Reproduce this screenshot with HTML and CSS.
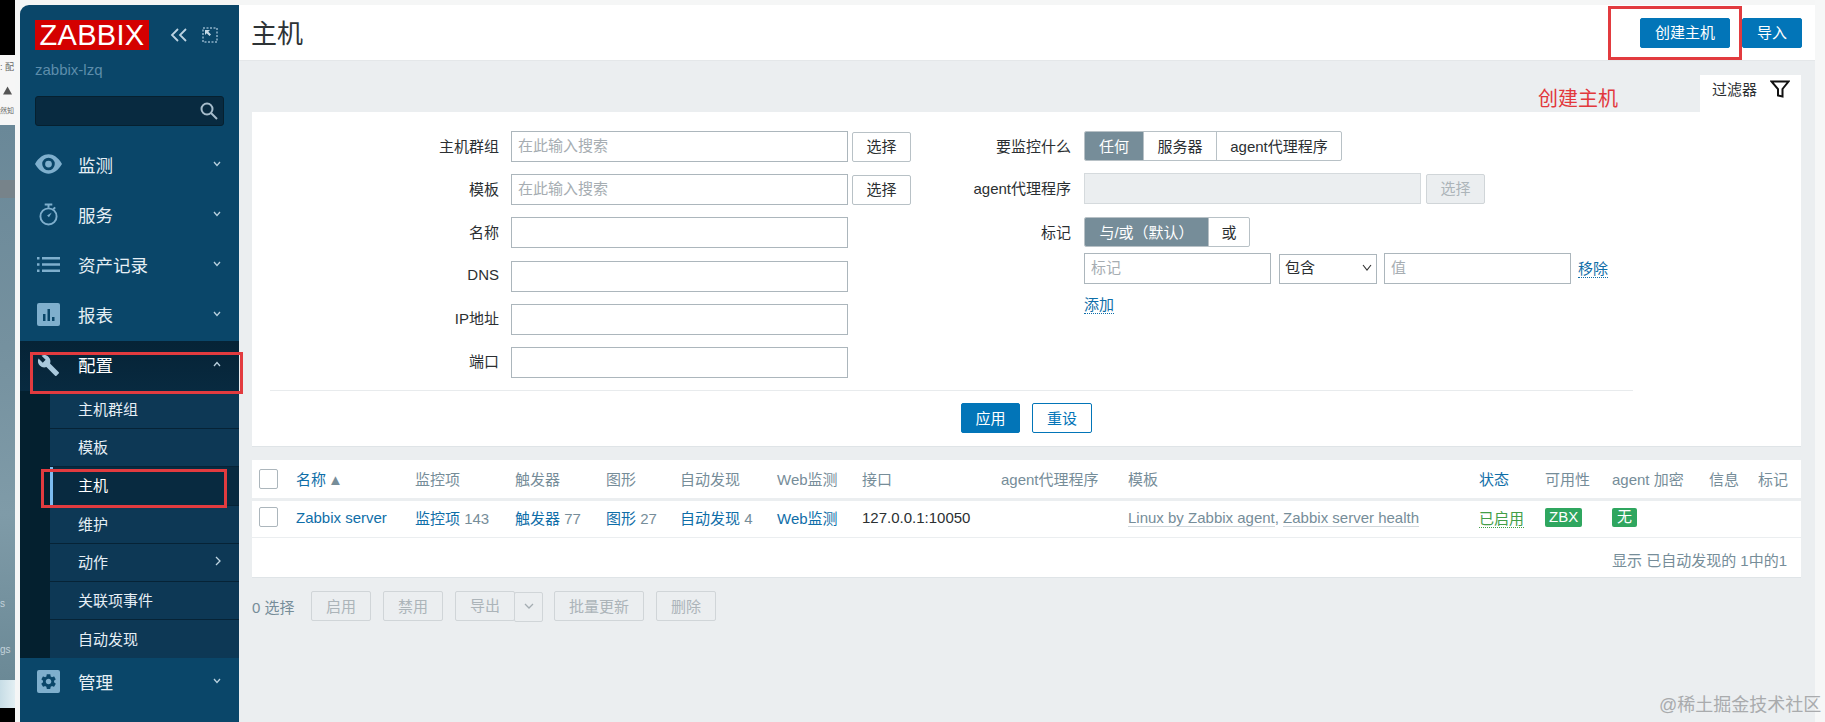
FILE: index.html
```html
<!DOCTYPE html>
<html lang="zh">
<head>
<meta charset="utf-8">
<title>主机 - Zabbix</title>
<link rel="stylesheet" href="styles.css">
</head>
<body>
<div class="screen">
  <div class="backdrop">
    <div class="bd-black-top"></div>
    <div class="bd-notes">
      <span class="bd-note">: 配</span>
      <svg class="bd-warn" viewBox="0 0 10 9"><path d="M5 0l5 9H0z"/></svg>
      <span class="bd-note bd-note-small">然知</span>
    </div>
    <div class="bd-blue">
      <div class="bd-band"></div>
      <span class="bd-s bd-s1">s</span>
      <span class="bd-s bd-s2">gs</span>
    </div>
    <div class="bd-light"></div>
    <div class="bd-black-bottom"></div>
  </div>

  <aside class="sidebar">
    <div class="brand">
      <div class="logo">ZABBIX</div>
      <svg class="collapse-icon" viewBox="0 0 18 14"><path d="M8 1L2 7l6 6M16 1l-6 6 6 6"/></svg>
      <svg class="expand-icon" viewBox="0 0 16 16"><path class="dash" d="M1 1h14v14H1z"/><path class="arrow" d="M3 3h5L6.300 4.700 9 7.500 7.500 9 4.700 6.300 3 8z"/></svg>
    </div>
    <div class="server-name">zabbix-lzq</div>
    <div class="search">
      <svg class="search-icon" viewBox="0 0 18 18"><circle cx="7" cy="7" r="5.500"/><path d="M11 11l6 6"/></svg>
    </div>
    <nav class="menu">
      <a class="menu-row">
        <span class="menu-ico"><svg class="ic-eye" viewBox="0 0 28 20"><path fill-rule="evenodd" d="M0 10C4 3 9 0 14 0s10 3 14 10c-4 7-9 10-14 10S4 17 0 10zM14 3.500a6.500 6.500 0 1 0 0 13 6.500 6.500 0 0 0 0-13z"/><circle cx="14" cy="10" r="3.500"/></svg></span>
        <span class="menu-text">监测</span>
        <svg class="chev" viewBox="0 0 8 6"><path d="M1 1l3 3.500L7 1"/></svg>
      </a>
      <a class="menu-row">
        <span class="menu-ico"><svg class="ic-watch" viewBox="0 0 20 24"><circle cx="10" cy="14" r="8.500"/><path d="M6 1.500h8M10 2v3M17 4.500l-2 2"/><path class="needle" d="M13.500 10l-5 3 2 2z"/></svg></span>
        <span class="menu-text">服务</span>
        <svg class="chev" viewBox="0 0 8 6"><path d="M1 1l3 3.500L7 1"/></svg>
      </a>
      <a class="menu-row">
        <span class="menu-ico"><svg class="ic-list" viewBox="0 0 23 15"><path d="M0 1.200h2.500M5 1.200h18M0 7.500h2.500M5 7.500h18M0 13.800h2.500M5 13.800h18"/></svg></span>
        <span class="menu-text">资产记录</span>
        <svg class="chev" viewBox="0 0 8 6"><path d="M1 1l3 3.500L7 1"/></svg>
      </a>
      <a class="menu-row">
        <span class="menu-ico"><svg class="ic-report" viewBox="0 0 23 23"><rect width="23" height="23" rx="2"/><path class="bars" d="M6 11h2.500v7H6zM10.500 6H13v12h-2.500zM15 14h2.500v4H15z"/></svg></span>
        <span class="menu-text">报表</span>
        <svg class="chev" viewBox="0 0 8 6"><path d="M1 1l3 3.500L7 1"/></svg>
      </a>
      <div class="menu-open">
        <a class="menu-row menu-row-active">
          <span class="menu-ico"><svg class="ic-wrench" viewBox="0 0 24 24"><path d="M22.700 19l-9.100-9.100c.9-2.300.4-5-1.500-6.900-2-2-5-2.400-7.400-1.300L9 6 6 9 1.600 4.700C.4 7.100.9 10.100 2.900 12.100c1.900 1.900 4.600 2.400 6.900 1.500l9.100 9.100c.4.4 1 .4 1.400 0l2.300-2.300c.5-.4.5-1.100.1-1.400z"/></svg></span>
          <span class="menu-text menu-text-active">配置</span>
          <svg class="chev" viewBox="0 0 8 6"><path d="M1 5l3-3.500L7 5"/></svg>
        </a>
        <div class="submenu">
          <a class="sub-row">主机群组</a>
          <a class="sub-row">模板</a>
          <a class="sub-row sub-row-current">主机</a>
          <a class="sub-row">维护</a>
          <a class="sub-row">动作<svg class="chev-right" viewBox="0 0 6 10"><path d="M1 1l4 4-4 4"/></svg></a>
          <a class="sub-row">关联项事件</a>
          <a class="sub-row">自动发现</a>
        </div>
      </div>
      <a class="menu-row">
        <span class="menu-ico"><svg class="ic-gear" viewBox="0 0 23 23"><rect width="23" height="23" rx="2"/><g transform="translate(2.300 2.300) scale(.77)"><path class="bars" d="M19.140 12.940c.04-.3.06-.61.06-.94 0-.32-.02-.64-.07-.94l2.030-1.580c.18-.14.23-.41.12-.61l-1.920-3.320c-.12-.22-.37-.29-.59-.22l-2.390.96c-.5-.38-1.030-.7-1.620-.94l-.36-2.540c-.04-.24-.24-.41-.48-.41h-3.840c-.24 0-.43.17-.47.41l-.36 2.540c-.59.24-1.130.57-1.620.94l-2.390-.96c-.22-.08-.47 0-.59.22L2.740 8.870c-.12.21-.08.47.12.61l2.030 1.580c-.05.3-.09.63-.09.94s.02.64.07.94l-2.030 1.580c-.18.14-.23.41-.12.61l1.920 3.320c.12.22.37.29.59.22l2.390-.96c.5.38 1.030.7 1.620.94l.36 2.540c.05.24.24.41.48.41h3.840c.24 0 .44-.17.47-.41l.36-2.540c.59-.24 1.130-.56 1.620-.94l2.390.96c.22.08.47 0 .59-.22l1.920-3.320c.12-.22.07-.47-.12-.61l-2.010-1.580zM12 15.600c-1.980 0-3.600-1.620-3.600-3.600s1.620-3.600 3.600-3.600 3.600 1.620 3.600 3.600-1.620 3.600-3.600 3.600z"/></g></svg></span>
        <span class="menu-text">管理</span>
        <svg class="chev" viewBox="0 0 8 6"><path d="M1 1l3 3.500L7 1"/></svg>
      </a>
    </nav>
  </aside>

  <main class="main">
    <header class="page-header">
      <h1 class="page-title">主机</h1>
      <div class="header-actions">
        <button class="btn btn-primary btn-create">创建主机</button>
        <button class="btn btn-primary btn-import">导入</button>
      </div>
    </header>
    <div class="content">
      <div class="tab-row">
        <div class="filter-tab">
          <span>过滤器</span>
          <svg class="filter-icon" viewBox="0 0 20 18"><path d="M1.500 1.500h17l-6 7.500v7.500l-4.500-1V9z"/></svg>
        </div>
      </div>
      <section class="filter-card">
        <div class="filter-grid">
          <div class="filter-left">
            <div class="f-row"><label class="f-label">主机群组</label><input class="f-input" placeholder="在此输入搜索"><button class="btn btn-select">选择</button></div>
            <div class="f-row"><label class="f-label">模板</label><input class="f-input" placeholder="在此输入搜索"><button class="btn btn-select">选择</button></div>
            <div class="f-row"><label class="f-label">名称</label><input class="f-input"></div>
            <div class="f-row"><label class="f-label">DNS</label><input class="f-input"></div>
            <div class="f-row"><label class="f-label">IP地址</label><input class="f-input"></div>
            <div class="f-row"><label class="f-label">端口</label><input class="f-input"></div>
          </div>
          <div class="filter-right">
            <div class="r-row r-row-1">
              <label class="r-label">要监控什么</label>
              <div class="seg">
                <span class="seg-item seg-on seg-any">任何</span>
                <span class="seg-item seg-server">服务器</span>
                <span class="seg-item seg-agent">agent代理程序</span>
              </div>
            </div>
            <div class="r-row r-row-2">
              <label class="r-label">agent代理程序</label>
              <div class="proxy-input"></div>
              <button class="btn btn-disabled btn-proxy">选择</button>
            </div>
            <div class="r-row r-row-3">
              <label class="r-label">标记</label>
              <div class="seg">
                <span class="seg-item seg-on seg-andor">与/或（默认）</span>
                <span class="seg-item seg-or">或</span>
              </div>
            </div>
            <div class="r-row r-row-4">
              <span class="r-label"></span>
              <input class="f-input tag-input" placeholder="标记">
              <div class="select-wrap">
                <select class="tag-select"><option>包含</option></select>
                <svg class="select-chev" viewBox="0 0 10 7"><path d="M1 1l4 5 4-5"/></svg>
              </div>
              <input class="f-input tag-input tag-value" placeholder="值">
              <a class="dotted-link">移除</a>
            </div>
            <div class="r-row r-row-5">
              <span class="r-label"></span>
              <a class="dotted-link">添加</a>
            </div>
          </div>
        </div>
        <div class="filter-sep"></div>
        <div class="filter-actions">
          <button class="btn btn-primary btn-apply">应用</button>
          <button class="btn btn-reset">重设</button>
        </div>
      </section>

      <section class="table-card">
        <table class="hosts">
          <colgroup>
            <col class="c1"><col class="c2"><col class="c3"><col class="c4"><col class="c5"><col class="c6"><col class="c7"><col class="c8"><col class="c9"><col class="c10"><col class="c11"><col class="c12"><col class="c13"><col class="c14"><col class="c15">
          </colgroup>
          <thead>
            <tr>
              <th><span class="check"></span></th>
              <th><a class="link">名称</a><span class="sort">▲</span></th>
              <th>监控项</th><th>触发器</th><th>图形</th><th>自动发现</th><th>Web监测</th><th>接口</th><th>agent代理程序</th><th>模板</th>
              <th><a class="link">状态</a></th><th>可用性</th><th>agent 加密</th><th>信息</th><th>标记</th>
            </tr>
          </thead>
          <tbody>
            <tr>
              <td><span class="check"></span></td>
              <td><a class="link">Zabbix server</a></td>
              <td><a class="link">监控项</a> <span class="num">143</span></td>
              <td><a class="link">触发器</a> <span class="num">77</span></td>
              <td><a class="link">图形</a> <span class="num">27</span></td>
              <td><a class="link">自动发现</a> <span class="num">4</span></td>
              <td><a class="link">Web监测</a></td>
              <td class="plain">127.0.0.1:10050</td>
              <td></td>
              <td><a class="tpl">Linux by Zabbix agent</a><span class="num">, </span><a class="tpl">Zabbix server health</a></td>
              <td><a class="enabled">已启用</a></td>
              <td><span class="badge">ZBX</span></td>
              <td><span class="badge">无</span></td>
              <td></td>
              <td></td>
            </tr>
          </tbody>
        </table>
        <div class="table-foot">显示 已自动发现的 1中的1</div>
      </section>

      <div class="bulk-bar">
        <span class="selected">0 选择</span>
        <button class="btn btn-disabled btn-bulk">启用</button>
        <button class="btn btn-disabled btn-bulk">禁用</button>
        <div class="export-group">
          <button class="btn btn-disabled btn-bulk">导出</button>
          <button class="btn btn-disabled btn-drop"><svg class="drop-chev" viewBox="0 0 10 6"><path d="M1 1l4 4 4-4"/></svg></button>
        </div>
        <button class="btn btn-disabled btn-mass">批量更新</button>
        <button class="btn btn-disabled btn-bulk">删除</button>
      </div>
    </div>
  </main>
  <div class="main-edge"></div>

  <div class="mark mark-config"></div>
  <div class="mark mark-hosts"></div>
  <div class="mark mark-create"></div>
  <div class="mark-note">创建主机</div>
  <div class="watermark">@稀土掘金技术社区</div>
</div>
</body>
</html>
```
FILE: styles.css
```css
* { box-sizing: border-box; }
html, body { margin: 0; padding: 0; }
body {
  font-family: "Liberation Sans", "Noto Sans CJK SC", sans-serif;
  font-size: 15px;
  color: #2b2f32;
  background: #f4f5f5;
}
a { text-decoration: none; }
.screen {
  position: relative;
  display: flex;
  width: 1825px;
  height: 722px;
  overflow: hidden;
  background: #f5f6f6;
}

/* window behind the browser */
.backdrop { width: 15px; flex: none; display: flex; flex-direction: column; overflow: hidden; }
.bd-black-top { height: 55px; background: #000; }
.bd-notes {
  height: 70px; background: #f6f6f6; display: flex; flex-direction: column;
  padding-top: 6px; white-space: nowrap;
}
.bd-note { font-size: 9px; line-height: 12px; color: #666; }
.bd-note-small { font-size: 7px; margin-top: 10px; }
.bd-warn { width: 9px; height: 9px; margin: 13px 0 0 3px; fill: #555; flex: none; }
.bd-blue {
  flex: 1; position: relative;
  background: linear-gradient(180deg, #6a8898 0%, #75919f 40%, #7f9ba8 70%, #6b8996 100%);
}
.bd-band { height: 18px; margin-top: 55px; background: #77838a; }
.bd-s { position: absolute; color: #c3d2da; font-size: 10px; line-height: 12px; }
.bd-s1 { left: 0; top: 473px; }
.bd-s2 { left: 0; top: 519px; }
.bd-light { height: 28px; background: linear-gradient(90deg, #c7dde6, #e3eff3); }
.bd-black-bottom { height: 14px; background: #000; }

/* sidebar */
.sidebar {
  width: 219px; flex: none; margin: 5px 0 0 5px;
  background: #0a4669; border-top-left-radius: 9px;
  display: flex; flex-direction: column;
}
.brand { display: flex; align-items: center; padding: 15px 0 0 15px; }
.logo {
  width: 114px; height: 30px; background: #d40000; color: #fff;
  font-size: 29px; line-height: 30px; text-align: center; letter-spacing: .3px;
}
.collapse-icon { width: 18px; height: 14px; margin-left: 21px; fill: none; stroke: #bcd3e2; stroke-width: 1.800; }
.expand-icon { width: 16px; height: 16px; margin-left: 14px; }
.expand-icon .dash { fill: none; stroke: #8fb2c9; stroke-width: 1.500; stroke-dasharray: 2 1.500; }
.expand-icon .arrow { fill: #c6dae6; }
.server-name { margin: 11px 0 0 15px; font-size: 15px; line-height: 17px; color: #5d8dab; }
.search {
  margin: 18px 15px 0; height: 30px; background: #082a40; border: 1px solid #06202f;
  border-radius: 3px; display: flex; align-items: center; justify-content: flex-end; padding-right: 5px;
}
.search-icon { width: 18px; height: 18px; fill: none; stroke: #a6bccb; stroke-width: 2; }
.menu { margin-top: 15px; display: flex; flex-direction: column; }
.menu-row { height: 50px; display: flex; align-items: center; padding: 0 18px 4px 15px; color: #e6eff5; }
.menu-ico { width: 43px; flex: none; display: flex; justify-content: center; padding-right: 16px; }
.menu-text { flex: 1; font-size: 17.500px; }
.menu-text-active { color: #fff; }
.menu-ico svg { display: block; }
.ic-eye { width: 27px; height: 20px; flex: none; fill: #7fafcd; }
.ic-watch { width: 19px; height: 23px; flex: none; fill: none; stroke: #7fafcd; stroke-width: 2; }
.ic-watch .needle { fill: #7fafcd; stroke: none; }
.ic-list { width: 23px; height: 15px; flex: none; fill: none; stroke: #7fafcd; stroke-width: 2.400; }
.ic-report, .ic-gear { width: 23px; height: 23px; flex: none; fill: #7fafcd; }
.bars { fill: #0a4669; }
.ic-wrench { width: 23px; height: 23px; flex: none; fill: #a9c9dd; margin-top: 3px; }
.chev { width: 8px; height: 6px; flex: none; fill: none; stroke: #b9d0de; stroke-width: 1.300; }
.menu-open { background: #04202f; height: 317px; }
.menu-row-active { background: linear-gradient(180deg, #062336, #082a40); }
.submenu { margin-left: 30px; display: flex; flex-direction: column; }
.sub-row {
  height: 38.200px; display: flex; align-items: center; justify-content: space-between;
  padding: 0 18px 2px 28px; background: #0d3855; border-bottom: 1px solid #062336;
  color: #e6eff5; font-size: 15px;
}
.sub-row:last-child { border-bottom: 0; }
.sub-row-current { background: #082a40; border-left: 3px solid #7cbcf0; padding-left: 25px; color: #fff; }
.chev-right { width: 6px; height: 10px; fill: none; stroke: #c0d5e2; stroke-width: 1.300; }

/* main */
.main { width: 1576px; flex: none; margin-top: 5px; display: flex; flex-direction: column; background: #ebeef0; }
.main-edge { flex: 1; background: #f6f7f7; }
.page-header {
  height: 56px; flex: none; background: #fff; border-bottom: 1px solid #e4e7e9;
  display: flex; align-items: center; justify-content: space-between; padding: 0 13px 0 12px;
}
.page-title { margin: 2px 0 0; font-size: 26px; font-weight: 400; line-height: 32px; color: #2d3336; }
.header-actions { display: flex; gap: 12px; }
.btn {
  height: 30px; padding: 0 0 2px; border-radius: 2px; border: 1px solid #b8c1c6; background: #fff;
  font: inherit; font-size: 15px; color: #2b2f32; display: block;
}
.btn-primary { background: #0275b8; border-color: #0275b8; color: #fff; }
.btn-create { width: 90px; }
.btn-import { width: 60px; }
.content { flex: 1; padding: 0 14px 0 13px; }
.tab-row { height: 51px; display: flex; justify-content: flex-end; align-items: flex-end; }
.filter-tab {
  width: 101px; height: 37px; background: #fff; display: flex; align-items: center;
  padding: 0 11px 10px 12px; justify-content: space-between; font-size: 15px; color: #2b2f32;
}
.filter-icon { width: 20px; height: 18px; fill: none; stroke: #111; stroke-width: 2; }
.filter-card { height: 335px; background: #fff; border-bottom: 1px solid #dfe4e7; padding-top: 19px; }
.filter-grid { display: flex; height: 259px; }
.filter-left { width: 659px; flex: none; display: flex; flex-direction: column; gap: 12.200px; }
.f-row { display: flex; align-items: center; height: 31px; }
.f-label { width: 247px; flex: none; text-align: right; margin-right: 12px; padding-bottom: 3px; font-size: 15px; }
.f-input {
  width: 337px; height: 31px; flex: none; border: 1px solid #acb6bc; background: #fff; border-radius: 0;
  padding: 0 6px 2px; font: inherit; font-size: 15px; outline: 0;
}
.f-input::placeholder { color: #a6adb2; opacity: 1; }
.btn-select { width: 59px; margin-left: 4px; }
.filter-right { flex: 1; display: flex; flex-direction: column; }
.r-row { display: flex; align-items: center; }
.r-row-1 { height: 30px; margin-bottom: 12px; }
.r-row-2 { height: 31px; margin-bottom: 13px; }
.r-row-3 { height: 30px; margin-bottom: 6px; }
.r-row-4 { height: 31px; margin-bottom: 11px; }
.r-row-5 { height: 20px; }
.r-label { width: 160px; flex: none; text-align: right; margin-right: 13px; padding-bottom: 2px; font-size: 15px; white-space: nowrap; }
.seg { display: flex; height: 30px; border: 1px solid #b8c1c6; border-radius: 2px; overflow: hidden; }
.seg-item { display: flex; align-items: center; justify-content: center; padding-bottom: 2px; font-size: 15px; white-space: nowrap; border-left: 1px solid #b8c1c6; }
.seg-item:first-child { border-left: 0; }
.seg-on { background: #768d99; color: #fff; }
.seg-any { width: 58px; }
.seg-server { width: 73px; }
.seg-agent { width: 125px; }
.seg-andor { width: 123px; }
.seg-or { width: 41px; }
.proxy-input { width: 337px; height: 31px; background: #ebeef0; border: 1px solid #d5dadd; }
.btn-disabled { background: #ebeef0; border-color: #d0d5d8; color: #acb4b9; }
.btn-proxy { width: 59px; margin-left: 5px; height: 30px; }
.tag-input { width: 187px; }
.select-wrap { position: relative; width: 98px; height: 30px; margin-left: 8px; flex: none; }
.tag-select {
  display: block; width: 100%; height: 100%; border: 1px solid #acb6bc; border-radius: 0; background: #fff;
  font: inherit; font-size: 15px; color: #2b2f32; padding: 0 0 2px 5px; appearance: none; -webkit-appearance: none;
}
.select-chev {
  position: absolute; right: 5px; top: 10px; width: 10px; height: 7px;
  fill: none; stroke: #333; stroke-width: 1.100; pointer-events: none;
}
.tag-value { margin-left: 7px; }
.dotted-link { color: #0f6ea8; font-size: 15px; border-bottom: 1px dotted #0f6ea8; line-height: 17px; }
.r-row-4 .dotted-link { margin-left: 7px; }
.filter-sep { height: 1px; background: #e8ebed; margin: 0 168px 0 18px; }
.filter-actions { display: flex; justify-content: center; gap: 12px; padding-top: 12px; }
.btn-apply { width: 59px; }
.btn-reset { width: 60px; border-color: #0275b8; color: #0275b8; }

.table-card { margin-top: 13px; height: 118px; background: #fff; border-bottom: 1px solid #dfe4e7; }
.hosts { width: 1549px; table-layout: fixed; border-collapse: collapse; }
.c1 { width: 44px; } .c2 { width: 119px; } .c3 { width: 100px; } .c4 { width: 91px; } .c5 { width: 74px; }
.c6 { width: 97px; } .c7 { width: 85px; } .c8 { width: 139px; } .c9 { width: 127px; } .c10 { width: 351px; }
.c11 { width: 66px; } .c12 { width: 67px; } .c13 { width: 97px; } .c14 { width: 49px; } .c15 { width: 43px; }
.hosts th, .hosts td { padding: 0; text-align: left; font-weight: 400; font-size: 15px; white-space: nowrap; overflow: visible; }
.hosts th { height: 39px; color: #768d99; border-bottom: 3px solid #ebeef0; }
.hosts td { height: 38px; padding-bottom: 3px; border-bottom: 1px solid #ebeef0; color: #768d99; }
.hosts td.plain { color: #2b2f32; }
.check {
  display: block; width: 19px; height: 20px; margin-left: 7px; border: 1px solid #acb6bc; border-radius: 2px; background: #fff;
}
.link { color: #0f6ea8; }
.sort { font-size: 15px; line-height: 1; color: #768d99; margin-left: 2px; }
.num { color: #768d99; }
.tpl { color: #768d99; border-bottom: 1px solid #cfd6da; }
.enabled { color: #429e47; border-bottom: 1px dotted #429e47; }
.badge {
  display: inline-block; height: 19px; line-height: 18px; padding: 0 4px; min-width: 25px; text-align: center;
  background: #2fa65f; color: #fff; font-size: 15px; border-radius: 2px; vertical-align: middle;
}
.table-foot { height: 41px; line-height: 45px; text-align: right; padding-right: 14px; color: #768d99; font-size: 15px; }

.bulk-bar { display: flex; align-items: center; margin-top: 13px; height: 30px; }
.selected { width: 59px; color: #768d99; font-size: 15px; }
.btn-bulk { width: 60px; }
.btn-mass { width: 90px; margin: 0 12px 0 11px; }
.bulk-bar > .btn-bulk:nth-of-type(1) { margin-right: 12px; }
.bulk-bar > .btn-bulk:nth-of-type(2) { margin-right: 12px; }
.export-group { display: flex; align-items: flex-start; }
.btn-drop { width: 29px; margin: 1px 0 0 -1px; display: flex; align-items: center; justify-content: center; }
.drop-chev { width: 10px; height: 6px; fill: none; stroke: #a4adb2; stroke-width: 1.300; }

/* annotations over the screenshot */
.mark { position: absolute; border: 3px solid #e23b3f; pointer-events: none; }
.mark-config { left: 30px; top: 352px; width: 213px; height: 42px; }
.mark-hosts { left: 41px; top: 469px; width: 186px; height: 39px; }
.mark-create { left: 1608px; top: 6px; width: 134px; height: 54px; }
.mark-note { position: absolute; left: 1538px; top: 86px; font-size: 20px; line-height: 26px; color: #e2383c; }
.watermark { position: absolute; left: 1659px; top: 693px; font-size: 18px; line-height: 24px; color: #a9abad; white-space: nowrap; }
```
